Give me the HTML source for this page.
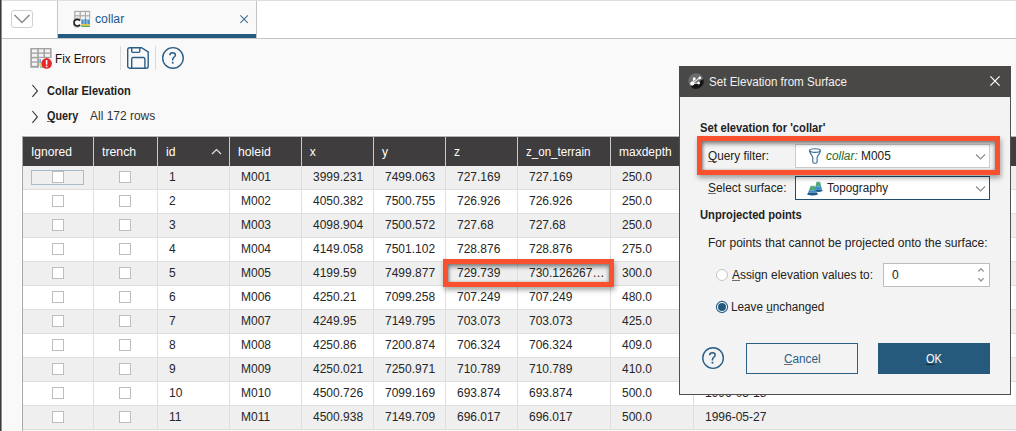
<!DOCTYPE html>
<html><head><meta charset="utf-8"><style>
html,body{margin:0;padding:0;}
body{width:1016px;height:431px;overflow:hidden;position:relative;font-family:"Liberation Sans", sans-serif;}
.t{position:absolute;white-space:nowrap;}
u{text-decoration:underline;text-decoration-skip-ink:none;text-decoration-thickness:1px;text-underline-offset:1px;text-decoration-color:rgba(0,0,0,0.55)}
div{box-sizing:content-box}
</style></head><body>
<div style="position:absolute;left:0px;top:0px;width:1016px;height:431px;background:#f9f9f9"></div><div style="position:absolute;left:0px;top:0px;width:1016px;height:38px;background:#fff"></div><div style="position:absolute;left:0px;top:0px;width:1016px;height:1px;background:#dedede"></div><div style="position:absolute;left:0px;top:38px;width:1016px;height:1px;background:#c4c4c4"></div><div style="position:absolute;left:11px;top:10px;width:20px;height:16px;border:1px solid #cfcfcf;border-radius:3px;background:#fff"></div><svg style="position:absolute;left:11px;top:10px" width="22" height="18"><polyline points="3.5,5 11,12.5 18.5,5" fill="none" stroke="#8a8a8a" stroke-width="1.5"/></svg><div style="position:absolute;left:57px;top:1px;width:199px;height:37px;background:#f9f9f9;border-left:1px solid #c4c4c4;border-right:1px solid #c4c4c4;box-sizing:border-box;width:200px"></div><div style="position:absolute;left:58px;top:34px;width:198px;height:4px;background:#245a80"></div><svg style="position:absolute;left:73px;top:10px" width="18" height="18" viewBox="0 0 18 18">
<rect x="1.2" y="0.8" width="16" height="16.2" fill="#a9a9a9"/>
<g fill="#f2f2f2"><rect x="2.4" y="2" width="4.2" height="3.2"/><rect x="7.8" y="2" width="4.2" height="3.2"/><rect x="13" y="2" width="3.2" height="3.2"/>
<rect x="2.4" y="6.4" width="4.2" height="2.6"/><rect x="7.8" y="6.4" width="4.2" height="2.6"/><rect x="13" y="6.4" width="3.2" height="2.6"/></g>
<rect x="0" y="9" width="18" height="9" fill="#f9f9f9"/>
<rect x="1.2" y="9" width="1" height="8" fill="#bbb"/>
<g><rect x="8.3" y="9.5" width="2.4" height="4.6" fill="#4a90c8"/><rect x="11.3" y="9" width="2.4" height="5.1" fill="#4a90c8"/><rect x="14.3" y="9.5" width="2.6" height="4.6" fill="#4a90c8"/>
<rect x="8" y="14" width="9" height="1.6" fill="#f0c828"/><rect x="8.3" y="15.6" width="8.6" height="1.4" fill="#5aa66a"/></g>
<path d="M7 10.6 A3.4 3.4 0 1 0 7 14.8" fill="none" stroke="#1a1a1a" stroke-width="1.7"/>
<path d="M7.6 9.6 A4.5 4.5 0 1 0 7.6 15.8" fill="none" stroke="#888" stroke-width="0.7"/>
</svg><div class="t" style="left:95.40px;top:12.75px;font-size:12.5px;line-height:12.5px;color:#1c5890;font-weight:normal;font-style:normal;transform:scaleX(0.9795);transform-origin:0 0;">collar</div><svg style="position:absolute;left:239px;top:14px" width="11" height="11"><path d="M1.4 1.4 L8.8 8.8 M8.8 1.4 L1.4 8.8" stroke="#3f6f95" stroke-width="1.1"/></svg><div style="position:absolute;left:0px;top:0px;width:1px;height:431px;background:#3c3c3c"></div><div style="position:absolute;left:1px;top:0px;width:1px;height:431px;background:#8c8c8c"></div><div style="position:absolute;left:2px;top:39px;width:1px;height:392px;background:#ffffff"></div><svg style="position:absolute;left:30px;top:48px" width="23" height="21" viewBox="0 0 23 21">
<rect x="0.3" y="0" width="21.3" height="19.8" fill="#a3a3a3"/>
<g fill="#f4f4f4">
<rect x="2" y="1.4" width="5.2" height="3"/><rect x="8.8" y="1.4" width="4.6" height="3"/><rect x="15" y="1.4" width="5" height="3"/>
<rect x="2" y="5.8" width="5.2" height="3"/><rect x="8.8" y="5.8" width="4.6" height="3"/><rect x="15" y="5.8" width="5" height="3"/>
<rect x="2" y="10.4" width="5.2" height="3"/><rect x="2" y="14.8" width="5.2" height="3"/>
</g>
<rect x="9" y="10" width="13" height="11" fill="#f8f8f8"/>
<rect x="9.5" y="11" width="1.2" height="4" fill="#3a8ad0"/><rect x="9.5" y="15" width="1.2" height="3" fill="#e8c820"/><rect x="10" y="18.5" width="3" height="1" fill="#40a060"/>
<circle cx="16.6" cy="15.4" r="5.3" fill="#e2262b"/>
<rect x="15.8" y="12" width="1.6" height="4.6" fill="#fff"/><rect x="15.8" y="17.6" width="1.6" height="1.6" fill="#fff"/>
</svg><div class="t" style="left:54.67px;top:52.75px;font-size:12.5px;line-height:12.5px;color:#111111;font-weight:normal;font-style:normal;transform:scaleX(0.9336);transform-origin:0 0;">Fix Errors</div><div style="position:absolute;left:120px;top:46px;width:1px;height:24px;background:#dadada"></div><svg style="position:absolute;left:126px;top:46px" width="24" height="24" viewBox="0 0 24 24">
<path d="M3.7 1.7 H15.5 L22.2 6 V20.2 a2 2 0 0 1 -2 2 H3.7 a2 2 0 0 1 -2 -2 V3.7 a2 2 0 0 1 2 -2 Z" fill="none" stroke="#2b5f86" stroke-width="1.4"/>
<path d="M5.7 1.8 V4.9 a1.5 1.5 0 0 0 1.5 1.5 H12.3 a1.5 1.5 0 0 0 1.5 -1.5 V1.8" fill="none" stroke="#2b5f86" stroke-width="1.4"/>
<path d="M5.7 22.2 V13 a1.5 1.5 0 0 1 1.5 -1.5 H17.4 a1.5 1.5 0 0 1 1.5 1.5 V22.2" fill="none" stroke="#2b5f86" stroke-width="1.4"/>
</svg><div style="position:absolute;left:155px;top:46px;width:1px;height:24px;background:#dadada"></div><svg style="position:absolute;left:161px;top:46px" width="24" height="24" viewBox="0 0 24 24">
<circle cx="11.95" cy="11.95" r="10.3" fill="none" stroke="#2b5f86" stroke-width="1.4"/>
<g transform="translate(0.2,0)"><path d="M8.7 9.2 C8.7 7.6 10 6.7 11.5 6.7 C13 6.7 14.2 7.6 14.2 9 C14.2 10.2 13.5 10.8 12.6 11.4 C11.9 11.9 11.5 12.4 11.5 13.4 V14.4" fill="none" stroke="#2b5f86" stroke-width="1.5"/><rect x="10.65" y="15.8" width="1.7" height="1.8" fill="#2b5f86"/></g>
</svg><svg style="position:absolute;left:31px;top:84px" width="9" height="14"><polyline points="1.4,1 6.4,6.9 1.4,12.8" fill="none" stroke="#333" stroke-width="1.1"/></svg><div class="t" style="left:47.25px;top:84.00px;font-size:13px;line-height:13px;color:#222;font-weight:bold;font-style:normal;transform:scaleX(0.8519);transform-origin:0 0;">Collar Elevation</div><svg style="position:absolute;left:31px;top:110px" width="9" height="14"><polyline points="1.4,1 6.4,6.9 1.4,12.8" fill="none" stroke="#333" stroke-width="1.1"/></svg><div class="t" style="left:47.00px;top:109.00px;font-size:13px;line-height:13px;color:#222;font-weight:bold;font-style:normal;transform:scaleX(0.8281);transform-origin:0 0;"><u>Q</u>uery</div><div class="t" style="left:90.25px;top:109.75px;font-size:12.5px;line-height:12.5px;color:#333;font-weight:normal;font-style:normal;transform:scaleX(0.9582);transform-origin:0 0;">All 172 rows</div><div style="position:absolute;left:21px;top:135px;width:1000px;height:1px;background:#ffffff"></div><div style="position:absolute;left:21px;top:135px;width:1px;height:300px;background:#ffffff"></div><div style="position:absolute;left:22px;top:136px;width:1000px;height:1px;background:#b4b4b4"></div><div style="position:absolute;left:22px;top:136px;width:1px;height:300px;background:#a8a8a8"></div><div style="position:absolute;left:23px;top:137px;width:1000px;height:29px;background:#3f3d3d"></div><div style="position:absolute;left:93px;top:137px;width:1px;height:29px;background:#cacaca"></div><div style="position:absolute;left:157px;top:137px;width:1px;height:29px;background:#cacaca"></div><div style="position:absolute;left:229px;top:137px;width:1px;height:29px;background:#cacaca"></div><div style="position:absolute;left:301px;top:137px;width:1px;height:29px;background:#cacaca"></div><div style="position:absolute;left:373px;top:137px;width:1px;height:29px;background:#cacaca"></div><div style="position:absolute;left:445px;top:137px;width:1px;height:29px;background:#cacaca"></div><div style="position:absolute;left:517px;top:137px;width:1px;height:29px;background:#cacaca"></div><div style="position:absolute;left:610px;top:137px;width:1px;height:29px;background:#cacaca"></div><div style="position:absolute;left:693px;top:137px;width:1px;height:29px;background:#cacaca"></div><div class="t" style="left:31.00px;top:146.00px;font-size:12px;line-height:12px;color:#ffffff;font-weight:normal;font-style:normal;transform:scaleX(1.0045);transform-origin:0 0;">Ignored</div><div class="t" style="left:102.20px;top:146.00px;font-size:12px;line-height:12px;color:#ffffff;font-weight:normal;font-style:normal;transform:scaleX(1.0221);transform-origin:0 0;">trench</div><div class="t" style="left:166.20px;top:146.00px;font-size:12px;line-height:12px;color:#ffffff;font-weight:normal;font-style:normal;transform:scaleX(1.0155);transform-origin:0 0;">id</div><div class="t" style="left:238.00px;top:146.00px;font-size:12px;line-height:12px;color:#ffffff;font-weight:normal;font-style:normal;transform:scaleX(1.0206);transform-origin:0 0;">holeid</div><div class="t" style="left:309.75px;top:146.00px;font-size:12px;line-height:12px;color:#ffffff;font-weight:normal;font-style:normal;">x</div><div class="t" style="left:382.00px;top:146.00px;font-size:12px;line-height:12px;color:#ffffff;font-weight:normal;font-style:normal;">y</div><div class="t" style="left:454.00px;top:146.00px;font-size:12px;line-height:12px;color:#ffffff;font-weight:normal;font-style:normal;">z</div><div class="t" style="left:526.25px;top:146.00px;font-size:12px;line-height:12px;color:#ffffff;font-weight:normal;font-style:normal;transform:scaleX(0.9654);transform-origin:0 0;">z_on_terrain</div><div class="t" style="left:619.25px;top:146.00px;font-size:12px;line-height:12px;color:#ffffff;font-weight:normal;font-style:normal;transform:scaleX(0.9995);transform-origin:0 0;">maxdepth</div><svg style="position:absolute;left:210px;top:147px" width="13" height="9"><polyline points="2,7 6.5,2.5 11,7" fill="none" stroke="#e6e6e6" stroke-width="1.2"/></svg><div style="position:absolute;left:23px;top:166px;width:1000px;height:23px;background:#efefef"></div><div style="position:absolute;left:23px;top:189px;width:1000px;height:1px;background:#dedede"></div><div style="position:absolute;left:93px;top:166px;width:1px;height:24px;background:#dedede"></div><div style="position:absolute;left:157px;top:166px;width:1px;height:24px;background:#dedede"></div><div style="position:absolute;left:229px;top:166px;width:1px;height:24px;background:#dedede"></div><div style="position:absolute;left:301px;top:166px;width:1px;height:24px;background:#dedede"></div><div style="position:absolute;left:373px;top:166px;width:1px;height:24px;background:#dedede"></div><div style="position:absolute;left:445px;top:166px;width:1px;height:24px;background:#dedede"></div><div style="position:absolute;left:517px;top:166px;width:1px;height:24px;background:#dedede"></div><div style="position:absolute;left:610px;top:166px;width:1px;height:24px;background:#dedede"></div><div style="position:absolute;left:693px;top:166px;width:1px;height:24px;background:#dedede"></div><div style="position:absolute;left:52px;top:171px;width:10px;height:10px;border:1px solid #bdbdbd;background:#fff"></div><div style="position:absolute;left:119px;top:171px;width:10px;height:10px;border:1px solid #bdbdbd;background:#fff"></div><div class="t" style="left:169.00px;top:171.00px;font-size:12px;line-height:12px;color:#262626;font-weight:normal;font-style:normal;">1</div><div class="t" style="left:241.00px;top:171.00px;font-size:12px;line-height:12px;color:#262626;font-weight:normal;font-style:normal;">M001</div><div class="t" style="left:313.00px;top:171.00px;font-size:12px;line-height:12px;color:#262626;font-weight:normal;font-style:normal;">3999.231</div><div class="t" style="left:385.00px;top:171.00px;font-size:12px;line-height:12px;color:#262626;font-weight:normal;font-style:normal;">7499.063</div><div class="t" style="left:457.00px;top:171.00px;font-size:12px;line-height:12px;color:#262626;font-weight:normal;font-style:normal;">727.169</div><div class="t" style="left:529.00px;top:171.00px;font-size:12px;line-height:12px;color:#262626;font-weight:normal;font-style:normal;">727.169</div><div class="t" style="left:622.00px;top:171.00px;font-size:12px;line-height:12px;color:#262626;font-weight:normal;font-style:normal;">250.0</div><div style="position:absolute;left:23px;top:190px;width:1000px;height:23px;background:#ffffff"></div><div style="position:absolute;left:23px;top:213px;width:1000px;height:1px;background:#dedede"></div><div style="position:absolute;left:93px;top:190px;width:1px;height:24px;background:#dedede"></div><div style="position:absolute;left:157px;top:190px;width:1px;height:24px;background:#dedede"></div><div style="position:absolute;left:229px;top:190px;width:1px;height:24px;background:#dedede"></div><div style="position:absolute;left:301px;top:190px;width:1px;height:24px;background:#dedede"></div><div style="position:absolute;left:373px;top:190px;width:1px;height:24px;background:#dedede"></div><div style="position:absolute;left:445px;top:190px;width:1px;height:24px;background:#dedede"></div><div style="position:absolute;left:517px;top:190px;width:1px;height:24px;background:#dedede"></div><div style="position:absolute;left:610px;top:190px;width:1px;height:24px;background:#dedede"></div><div style="position:absolute;left:693px;top:190px;width:1px;height:24px;background:#dedede"></div><div style="position:absolute;left:52px;top:195px;width:10px;height:10px;border:1px solid #bdbdbd;background:#fff"></div><div style="position:absolute;left:119px;top:195px;width:10px;height:10px;border:1px solid #bdbdbd;background:#fff"></div><div class="t" style="left:169.00px;top:195.00px;font-size:12px;line-height:12px;color:#262626;font-weight:normal;font-style:normal;">2</div><div class="t" style="left:241.00px;top:195.00px;font-size:12px;line-height:12px;color:#262626;font-weight:normal;font-style:normal;">M002</div><div class="t" style="left:313.00px;top:195.00px;font-size:12px;line-height:12px;color:#262626;font-weight:normal;font-style:normal;">4050.382</div><div class="t" style="left:385.00px;top:195.00px;font-size:12px;line-height:12px;color:#262626;font-weight:normal;font-style:normal;">7500.755</div><div class="t" style="left:457.00px;top:195.00px;font-size:12px;line-height:12px;color:#262626;font-weight:normal;font-style:normal;">726.926</div><div class="t" style="left:529.00px;top:195.00px;font-size:12px;line-height:12px;color:#262626;font-weight:normal;font-style:normal;">726.926</div><div class="t" style="left:622.00px;top:195.00px;font-size:12px;line-height:12px;color:#262626;font-weight:normal;font-style:normal;">250.0</div><div style="position:absolute;left:23px;top:214px;width:1000px;height:23px;background:#efefef"></div><div style="position:absolute;left:23px;top:237px;width:1000px;height:1px;background:#dedede"></div><div style="position:absolute;left:93px;top:214px;width:1px;height:24px;background:#dedede"></div><div style="position:absolute;left:157px;top:214px;width:1px;height:24px;background:#dedede"></div><div style="position:absolute;left:229px;top:214px;width:1px;height:24px;background:#dedede"></div><div style="position:absolute;left:301px;top:214px;width:1px;height:24px;background:#dedede"></div><div style="position:absolute;left:373px;top:214px;width:1px;height:24px;background:#dedede"></div><div style="position:absolute;left:445px;top:214px;width:1px;height:24px;background:#dedede"></div><div style="position:absolute;left:517px;top:214px;width:1px;height:24px;background:#dedede"></div><div style="position:absolute;left:610px;top:214px;width:1px;height:24px;background:#dedede"></div><div style="position:absolute;left:693px;top:214px;width:1px;height:24px;background:#dedede"></div><div style="position:absolute;left:52px;top:219px;width:10px;height:10px;border:1px solid #bdbdbd;background:#fff"></div><div style="position:absolute;left:119px;top:219px;width:10px;height:10px;border:1px solid #bdbdbd;background:#fff"></div><div class="t" style="left:169.00px;top:219.00px;font-size:12px;line-height:12px;color:#262626;font-weight:normal;font-style:normal;">3</div><div class="t" style="left:241.00px;top:219.00px;font-size:12px;line-height:12px;color:#262626;font-weight:normal;font-style:normal;">M003</div><div class="t" style="left:313.00px;top:219.00px;font-size:12px;line-height:12px;color:#262626;font-weight:normal;font-style:normal;">4098.904</div><div class="t" style="left:385.00px;top:219.00px;font-size:12px;line-height:12px;color:#262626;font-weight:normal;font-style:normal;">7500.572</div><div class="t" style="left:457.00px;top:219.00px;font-size:12px;line-height:12px;color:#262626;font-weight:normal;font-style:normal;">727.68</div><div class="t" style="left:529.00px;top:219.00px;font-size:12px;line-height:12px;color:#262626;font-weight:normal;font-style:normal;">727.68</div><div class="t" style="left:622.00px;top:219.00px;font-size:12px;line-height:12px;color:#262626;font-weight:normal;font-style:normal;">250.0</div><div style="position:absolute;left:23px;top:238px;width:1000px;height:23px;background:#ffffff"></div><div style="position:absolute;left:23px;top:261px;width:1000px;height:1px;background:#dedede"></div><div style="position:absolute;left:93px;top:238px;width:1px;height:24px;background:#dedede"></div><div style="position:absolute;left:157px;top:238px;width:1px;height:24px;background:#dedede"></div><div style="position:absolute;left:229px;top:238px;width:1px;height:24px;background:#dedede"></div><div style="position:absolute;left:301px;top:238px;width:1px;height:24px;background:#dedede"></div><div style="position:absolute;left:373px;top:238px;width:1px;height:24px;background:#dedede"></div><div style="position:absolute;left:445px;top:238px;width:1px;height:24px;background:#dedede"></div><div style="position:absolute;left:517px;top:238px;width:1px;height:24px;background:#dedede"></div><div style="position:absolute;left:610px;top:238px;width:1px;height:24px;background:#dedede"></div><div style="position:absolute;left:693px;top:238px;width:1px;height:24px;background:#dedede"></div><div style="position:absolute;left:52px;top:243px;width:10px;height:10px;border:1px solid #bdbdbd;background:#fff"></div><div style="position:absolute;left:119px;top:243px;width:10px;height:10px;border:1px solid #bdbdbd;background:#fff"></div><div class="t" style="left:169.00px;top:243.00px;font-size:12px;line-height:12px;color:#262626;font-weight:normal;font-style:normal;">4</div><div class="t" style="left:241.00px;top:243.00px;font-size:12px;line-height:12px;color:#262626;font-weight:normal;font-style:normal;">M004</div><div class="t" style="left:313.00px;top:243.00px;font-size:12px;line-height:12px;color:#262626;font-weight:normal;font-style:normal;">4149.058</div><div class="t" style="left:385.00px;top:243.00px;font-size:12px;line-height:12px;color:#262626;font-weight:normal;font-style:normal;">7501.102</div><div class="t" style="left:457.00px;top:243.00px;font-size:12px;line-height:12px;color:#262626;font-weight:normal;font-style:normal;">728.876</div><div class="t" style="left:529.00px;top:243.00px;font-size:12px;line-height:12px;color:#262626;font-weight:normal;font-style:normal;">728.876</div><div class="t" style="left:622.00px;top:243.00px;font-size:12px;line-height:12px;color:#262626;font-weight:normal;font-style:normal;">275.0</div><div style="position:absolute;left:23px;top:262px;width:1000px;height:23px;background:#efefef"></div><div style="position:absolute;left:23px;top:285px;width:1000px;height:1px;background:#dedede"></div><div style="position:absolute;left:93px;top:262px;width:1px;height:24px;background:#dedede"></div><div style="position:absolute;left:157px;top:262px;width:1px;height:24px;background:#dedede"></div><div style="position:absolute;left:229px;top:262px;width:1px;height:24px;background:#dedede"></div><div style="position:absolute;left:301px;top:262px;width:1px;height:24px;background:#dedede"></div><div style="position:absolute;left:373px;top:262px;width:1px;height:24px;background:#dedede"></div><div style="position:absolute;left:445px;top:262px;width:1px;height:24px;background:#dedede"></div><div style="position:absolute;left:517px;top:262px;width:1px;height:24px;background:#dedede"></div><div style="position:absolute;left:610px;top:262px;width:1px;height:24px;background:#dedede"></div><div style="position:absolute;left:693px;top:262px;width:1px;height:24px;background:#dedede"></div><div style="position:absolute;left:52px;top:267px;width:10px;height:10px;border:1px solid #bdbdbd;background:#fff"></div><div style="position:absolute;left:119px;top:267px;width:10px;height:10px;border:1px solid #bdbdbd;background:#fff"></div><div class="t" style="left:169.00px;top:267.00px;font-size:12px;line-height:12px;color:#262626;font-weight:normal;font-style:normal;">5</div><div class="t" style="left:241.00px;top:267.00px;font-size:12px;line-height:12px;color:#262626;font-weight:normal;font-style:normal;">M005</div><div class="t" style="left:313.00px;top:267.00px;font-size:12px;line-height:12px;color:#262626;font-weight:normal;font-style:normal;">4199.59</div><div class="t" style="left:385.00px;top:267.00px;font-size:12px;line-height:12px;color:#262626;font-weight:normal;font-style:normal;">7499.877</div><div class="t" style="left:457.00px;top:267.00px;font-size:12px;line-height:12px;color:#262626;font-weight:normal;font-style:normal;">729.739</div><div class="t" style="left:529.00px;top:267.00px;font-size:12px;line-height:12px;color:#262626;font-weight:normal;font-style:normal;">730.126267…</div><div class="t" style="left:622.00px;top:267.00px;font-size:12px;line-height:12px;color:#262626;font-weight:normal;font-style:normal;">300.0</div><div style="position:absolute;left:23px;top:286px;width:1000px;height:23px;background:#ffffff"></div><div style="position:absolute;left:23px;top:309px;width:1000px;height:1px;background:#dedede"></div><div style="position:absolute;left:93px;top:286px;width:1px;height:24px;background:#dedede"></div><div style="position:absolute;left:157px;top:286px;width:1px;height:24px;background:#dedede"></div><div style="position:absolute;left:229px;top:286px;width:1px;height:24px;background:#dedede"></div><div style="position:absolute;left:301px;top:286px;width:1px;height:24px;background:#dedede"></div><div style="position:absolute;left:373px;top:286px;width:1px;height:24px;background:#dedede"></div><div style="position:absolute;left:445px;top:286px;width:1px;height:24px;background:#dedede"></div><div style="position:absolute;left:517px;top:286px;width:1px;height:24px;background:#dedede"></div><div style="position:absolute;left:610px;top:286px;width:1px;height:24px;background:#dedede"></div><div style="position:absolute;left:693px;top:286px;width:1px;height:24px;background:#dedede"></div><div style="position:absolute;left:52px;top:291px;width:10px;height:10px;border:1px solid #bdbdbd;background:#fff"></div><div style="position:absolute;left:119px;top:291px;width:10px;height:10px;border:1px solid #bdbdbd;background:#fff"></div><div class="t" style="left:169.00px;top:291.00px;font-size:12px;line-height:12px;color:#262626;font-weight:normal;font-style:normal;">6</div><div class="t" style="left:241.00px;top:291.00px;font-size:12px;line-height:12px;color:#262626;font-weight:normal;font-style:normal;">M006</div><div class="t" style="left:313.00px;top:291.00px;font-size:12px;line-height:12px;color:#262626;font-weight:normal;font-style:normal;">4250.21</div><div class="t" style="left:385.00px;top:291.00px;font-size:12px;line-height:12px;color:#262626;font-weight:normal;font-style:normal;">7099.258</div><div class="t" style="left:457.00px;top:291.00px;font-size:12px;line-height:12px;color:#262626;font-weight:normal;font-style:normal;">707.249</div><div class="t" style="left:529.00px;top:291.00px;font-size:12px;line-height:12px;color:#262626;font-weight:normal;font-style:normal;">707.249</div><div class="t" style="left:622.00px;top:291.00px;font-size:12px;line-height:12px;color:#262626;font-weight:normal;font-style:normal;">480.0</div><div style="position:absolute;left:23px;top:310px;width:1000px;height:23px;background:#efefef"></div><div style="position:absolute;left:23px;top:333px;width:1000px;height:1px;background:#dedede"></div><div style="position:absolute;left:93px;top:310px;width:1px;height:24px;background:#dedede"></div><div style="position:absolute;left:157px;top:310px;width:1px;height:24px;background:#dedede"></div><div style="position:absolute;left:229px;top:310px;width:1px;height:24px;background:#dedede"></div><div style="position:absolute;left:301px;top:310px;width:1px;height:24px;background:#dedede"></div><div style="position:absolute;left:373px;top:310px;width:1px;height:24px;background:#dedede"></div><div style="position:absolute;left:445px;top:310px;width:1px;height:24px;background:#dedede"></div><div style="position:absolute;left:517px;top:310px;width:1px;height:24px;background:#dedede"></div><div style="position:absolute;left:610px;top:310px;width:1px;height:24px;background:#dedede"></div><div style="position:absolute;left:693px;top:310px;width:1px;height:24px;background:#dedede"></div><div style="position:absolute;left:52px;top:315px;width:10px;height:10px;border:1px solid #bdbdbd;background:#fff"></div><div style="position:absolute;left:119px;top:315px;width:10px;height:10px;border:1px solid #bdbdbd;background:#fff"></div><div class="t" style="left:169.00px;top:315.00px;font-size:12px;line-height:12px;color:#262626;font-weight:normal;font-style:normal;">7</div><div class="t" style="left:241.00px;top:315.00px;font-size:12px;line-height:12px;color:#262626;font-weight:normal;font-style:normal;">M007</div><div class="t" style="left:313.00px;top:315.00px;font-size:12px;line-height:12px;color:#262626;font-weight:normal;font-style:normal;">4249.95</div><div class="t" style="left:385.00px;top:315.00px;font-size:12px;line-height:12px;color:#262626;font-weight:normal;font-style:normal;">7149.795</div><div class="t" style="left:457.00px;top:315.00px;font-size:12px;line-height:12px;color:#262626;font-weight:normal;font-style:normal;">703.073</div><div class="t" style="left:529.00px;top:315.00px;font-size:12px;line-height:12px;color:#262626;font-weight:normal;font-style:normal;">703.073</div><div class="t" style="left:622.00px;top:315.00px;font-size:12px;line-height:12px;color:#262626;font-weight:normal;font-style:normal;">425.0</div><div style="position:absolute;left:23px;top:334px;width:1000px;height:23px;background:#ffffff"></div><div style="position:absolute;left:23px;top:357px;width:1000px;height:1px;background:#dedede"></div><div style="position:absolute;left:93px;top:334px;width:1px;height:24px;background:#dedede"></div><div style="position:absolute;left:157px;top:334px;width:1px;height:24px;background:#dedede"></div><div style="position:absolute;left:229px;top:334px;width:1px;height:24px;background:#dedede"></div><div style="position:absolute;left:301px;top:334px;width:1px;height:24px;background:#dedede"></div><div style="position:absolute;left:373px;top:334px;width:1px;height:24px;background:#dedede"></div><div style="position:absolute;left:445px;top:334px;width:1px;height:24px;background:#dedede"></div><div style="position:absolute;left:517px;top:334px;width:1px;height:24px;background:#dedede"></div><div style="position:absolute;left:610px;top:334px;width:1px;height:24px;background:#dedede"></div><div style="position:absolute;left:693px;top:334px;width:1px;height:24px;background:#dedede"></div><div style="position:absolute;left:52px;top:339px;width:10px;height:10px;border:1px solid #bdbdbd;background:#fff"></div><div style="position:absolute;left:119px;top:339px;width:10px;height:10px;border:1px solid #bdbdbd;background:#fff"></div><div class="t" style="left:169.00px;top:339.00px;font-size:12px;line-height:12px;color:#262626;font-weight:normal;font-style:normal;">8</div><div class="t" style="left:241.00px;top:339.00px;font-size:12px;line-height:12px;color:#262626;font-weight:normal;font-style:normal;">M008</div><div class="t" style="left:313.00px;top:339.00px;font-size:12px;line-height:12px;color:#262626;font-weight:normal;font-style:normal;">4250.86</div><div class="t" style="left:385.00px;top:339.00px;font-size:12px;line-height:12px;color:#262626;font-weight:normal;font-style:normal;">7200.874</div><div class="t" style="left:457.00px;top:339.00px;font-size:12px;line-height:12px;color:#262626;font-weight:normal;font-style:normal;">706.324</div><div class="t" style="left:529.00px;top:339.00px;font-size:12px;line-height:12px;color:#262626;font-weight:normal;font-style:normal;">706.324</div><div class="t" style="left:622.00px;top:339.00px;font-size:12px;line-height:12px;color:#262626;font-weight:normal;font-style:normal;">409.0</div><div style="position:absolute;left:23px;top:358px;width:1000px;height:23px;background:#efefef"></div><div style="position:absolute;left:23px;top:381px;width:1000px;height:1px;background:#dedede"></div><div style="position:absolute;left:93px;top:358px;width:1px;height:24px;background:#dedede"></div><div style="position:absolute;left:157px;top:358px;width:1px;height:24px;background:#dedede"></div><div style="position:absolute;left:229px;top:358px;width:1px;height:24px;background:#dedede"></div><div style="position:absolute;left:301px;top:358px;width:1px;height:24px;background:#dedede"></div><div style="position:absolute;left:373px;top:358px;width:1px;height:24px;background:#dedede"></div><div style="position:absolute;left:445px;top:358px;width:1px;height:24px;background:#dedede"></div><div style="position:absolute;left:517px;top:358px;width:1px;height:24px;background:#dedede"></div><div style="position:absolute;left:610px;top:358px;width:1px;height:24px;background:#dedede"></div><div style="position:absolute;left:693px;top:358px;width:1px;height:24px;background:#dedede"></div><div style="position:absolute;left:52px;top:363px;width:10px;height:10px;border:1px solid #bdbdbd;background:#fff"></div><div style="position:absolute;left:119px;top:363px;width:10px;height:10px;border:1px solid #bdbdbd;background:#fff"></div><div class="t" style="left:169.00px;top:363.00px;font-size:12px;line-height:12px;color:#262626;font-weight:normal;font-style:normal;">9</div><div class="t" style="left:241.00px;top:363.00px;font-size:12px;line-height:12px;color:#262626;font-weight:normal;font-style:normal;">M009</div><div class="t" style="left:313.00px;top:363.00px;font-size:12px;line-height:12px;color:#262626;font-weight:normal;font-style:normal;">4250.021</div><div class="t" style="left:385.00px;top:363.00px;font-size:12px;line-height:12px;color:#262626;font-weight:normal;font-style:normal;">7250.971</div><div class="t" style="left:457.00px;top:363.00px;font-size:12px;line-height:12px;color:#262626;font-weight:normal;font-style:normal;">710.789</div><div class="t" style="left:529.00px;top:363.00px;font-size:12px;line-height:12px;color:#262626;font-weight:normal;font-style:normal;">710.789</div><div class="t" style="left:622.00px;top:363.00px;font-size:12px;line-height:12px;color:#262626;font-weight:normal;font-style:normal;">410.0</div><div style="position:absolute;left:23px;top:382px;width:1000px;height:23px;background:#ffffff"></div><div style="position:absolute;left:23px;top:405px;width:1000px;height:1px;background:#dedede"></div><div style="position:absolute;left:93px;top:382px;width:1px;height:24px;background:#dedede"></div><div style="position:absolute;left:157px;top:382px;width:1px;height:24px;background:#dedede"></div><div style="position:absolute;left:229px;top:382px;width:1px;height:24px;background:#dedede"></div><div style="position:absolute;left:301px;top:382px;width:1px;height:24px;background:#dedede"></div><div style="position:absolute;left:373px;top:382px;width:1px;height:24px;background:#dedede"></div><div style="position:absolute;left:445px;top:382px;width:1px;height:24px;background:#dedede"></div><div style="position:absolute;left:517px;top:382px;width:1px;height:24px;background:#dedede"></div><div style="position:absolute;left:610px;top:382px;width:1px;height:24px;background:#dedede"></div><div style="position:absolute;left:693px;top:382px;width:1px;height:24px;background:#dedede"></div><div style="position:absolute;left:52px;top:387px;width:10px;height:10px;border:1px solid #bdbdbd;background:#fff"></div><div style="position:absolute;left:119px;top:387px;width:10px;height:10px;border:1px solid #bdbdbd;background:#fff"></div><div class="t" style="left:169.00px;top:387.00px;font-size:12px;line-height:12px;color:#262626;font-weight:normal;font-style:normal;">10</div><div class="t" style="left:241.00px;top:387.00px;font-size:12px;line-height:12px;color:#262626;font-weight:normal;font-style:normal;">M010</div><div class="t" style="left:313.00px;top:387.00px;font-size:12px;line-height:12px;color:#262626;font-weight:normal;font-style:normal;">4500.726</div><div class="t" style="left:385.00px;top:387.00px;font-size:12px;line-height:12px;color:#262626;font-weight:normal;font-style:normal;">7099.169</div><div class="t" style="left:457.00px;top:387.00px;font-size:12px;line-height:12px;color:#262626;font-weight:normal;font-style:normal;">693.874</div><div class="t" style="left:529.00px;top:387.00px;font-size:12px;line-height:12px;color:#262626;font-weight:normal;font-style:normal;">693.874</div><div class="t" style="left:622.00px;top:387.00px;font-size:12px;line-height:12px;color:#262626;font-weight:normal;font-style:normal;">500.0</div><div class="t" style="left:705.00px;top:387.00px;font-size:12px;line-height:12px;color:#262626;font-weight:normal;font-style:normal;">1996-05-18</div><div style="position:absolute;left:23px;top:406px;width:1000px;height:23px;background:#efefef"></div><div style="position:absolute;left:23px;top:429px;width:1000px;height:1px;background:#dedede"></div><div style="position:absolute;left:93px;top:406px;width:1px;height:24px;background:#dedede"></div><div style="position:absolute;left:157px;top:406px;width:1px;height:24px;background:#dedede"></div><div style="position:absolute;left:229px;top:406px;width:1px;height:24px;background:#dedede"></div><div style="position:absolute;left:301px;top:406px;width:1px;height:24px;background:#dedede"></div><div style="position:absolute;left:373px;top:406px;width:1px;height:24px;background:#dedede"></div><div style="position:absolute;left:445px;top:406px;width:1px;height:24px;background:#dedede"></div><div style="position:absolute;left:517px;top:406px;width:1px;height:24px;background:#dedede"></div><div style="position:absolute;left:610px;top:406px;width:1px;height:24px;background:#dedede"></div><div style="position:absolute;left:693px;top:406px;width:1px;height:24px;background:#dedede"></div><div style="position:absolute;left:52px;top:411px;width:10px;height:10px;border:1px solid #bdbdbd;background:#fff"></div><div style="position:absolute;left:119px;top:411px;width:10px;height:10px;border:1px solid #bdbdbd;background:#fff"></div><div class="t" style="left:169.00px;top:411.00px;font-size:12px;line-height:12px;color:#262626;font-weight:normal;font-style:normal;">11</div><div class="t" style="left:241.00px;top:411.00px;font-size:12px;line-height:12px;color:#262626;font-weight:normal;font-style:normal;">M011</div><div class="t" style="left:313.00px;top:411.00px;font-size:12px;line-height:12px;color:#262626;font-weight:normal;font-style:normal;">4500.938</div><div class="t" style="left:385.00px;top:411.00px;font-size:12px;line-height:12px;color:#262626;font-weight:normal;font-style:normal;">7149.709</div><div class="t" style="left:457.00px;top:411.00px;font-size:12px;line-height:12px;color:#262626;font-weight:normal;font-style:normal;">696.017</div><div class="t" style="left:529.00px;top:411.00px;font-size:12px;line-height:12px;color:#262626;font-weight:normal;font-style:normal;">696.017</div><div class="t" style="left:622.00px;top:411.00px;font-size:12px;line-height:12px;color:#262626;font-weight:normal;font-style:normal;">500.0</div><div class="t" style="left:705.00px;top:411.00px;font-size:12px;line-height:12px;color:#262626;font-weight:normal;font-style:normal;">1996-05-27</div><div style="position:absolute;left:31px;top:170px;width:51px;height:13px;border:1px solid #a9bccb"></div><div style="position:absolute;left:443px;top:259px;width:161px;height:18px;border:5px solid #f9512f;box-shadow:1px 3px 5px rgba(0,0,0,0.35), inset 0px 3px 4px rgba(0,0,0,0.42), inset 1px 0px 3px rgba(0,0,0,0.25)"></div><div style="position:absolute;left:679px;top:66px;width:332px;height:329px;background:#f3f3f3;border:1px solid #505050;box-sizing:border-box"></div><div style="position:absolute;left:679px;top:66px;width:332px;height:31px;background:#4a4846"></div><svg style="position:absolute;left:687px;top:72px" width="18" height="18" viewBox="0 0 18 18">
<circle cx="9" cy="8.95" r="7.7" fill="#6c6c6c"/>
<path d="M3.5 14.4 L16.4 6.9 A7.7 7.7 0 0 1 3.5 14.4 Z" fill="#161616"/>
<g stroke="#e8e8e8" stroke-width="1.1"><line x1="5.2" y1="11.5" x2="7.2" y2="6.7"/><line x1="5.2" y1="11.5" x2="12.8" y2="5.9"/><line x1="5.2" y1="11.5" x2="11.6" y2="11"/></g>
<g fill="#fff"><circle cx="5.2" cy="11.5" r="2"/><circle cx="7.2" cy="6.7" r="1.5"/><circle cx="12.8" cy="5.9" r="1.4"/><circle cx="11.6" cy="11" r="1.4"/></g>
</svg><div class="t" style="left:709.20px;top:75.75px;font-size:12.5px;line-height:12.5px;color:#f2f2f2;font-weight:normal;font-style:normal;transform:scaleX(0.9279);transform-origin:0 0;">Set Elevation from Surface</div><svg style="position:absolute;left:988px;top:74px" width="13" height="13"><path d="M2.4 2.4 L11.6 11.6 M11.6 2.4 L2.4 11.6" stroke="#fff" stroke-width="1.25"/></svg><div class="t" style="left:700.25px;top:121.00px;font-size:13px;line-height:13px;color:#222;font-weight:bold;font-style:normal;transform:scaleX(0.8607);transform-origin:0 0;">Set elevation for 'collar'</div><div class="t" style="left:708.20px;top:149.75px;font-size:12.5px;line-height:12.5px;color:#222;font-weight:normal;font-style:normal;transform:scaleX(0.9434);transform-origin:0 0;"><u>Q</u>uery filter:</div><div style="position:absolute;left:795px;top:144px;width:195px;height:24px;border:1px solid #cccccc;background:#fff;box-sizing:border-box"></div><svg style="position:absolute;left:807px;top:147px" width="15" height="18" viewBox="0 0 15 18">
<ellipse cx="7.93" cy="3.55" rx="5.43" ry="1.8" fill="none" stroke="#3a6a90" stroke-width="1.1"/>
<path d="M2.5 3.55 C2.6 7 5.8 8.5 5.8 10.8 V14.75 a1.5 1.5 0 0 0 1.5 1.5 H8.6 a1.5 1.5 0 0 0 1.5 -1.5 V10.8 C10.1 8.5 13.3 7 13.35 3.55" fill="none" stroke="#3a6a90" stroke-width="1.1"/>
</svg><div class="t" style="left:826.20px;top:149.75px;font-size:12.5px;line-height:12.5px;color:#222;font-weight:normal;font-style:normal;transform:scaleX(0.9511);transform-origin:0 0;"><i style="color:#1f6a1f">collar:</i> M005</div><svg style="position:absolute;left:975px;top:153px" width="12" height="8"><polyline points="1,1.5 5.5,6 10,1.5" fill="none" stroke="#888" stroke-width="1.1"/></svg><div class="t" style="left:708.00px;top:181.75px;font-size:12.5px;line-height:12.5px;color:#222;font-weight:normal;font-style:normal;transform:scaleX(0.9488);transform-origin:0 0;"><u>S</u>elect surface:</div><div style="position:absolute;left:795px;top:176px;width:195px;height:24px;border:1px solid #1f4e72;background:#fff;box-sizing:border-box"></div><svg style="position:absolute;left:806px;top:179px" width="18" height="18" viewBox="0 0 18 18">
<path d="M10.57 2.80 Q12.30 0.90 14.03 2.80 Q12.30 3.60 10.57 2.80 Z" fill="#e4ecec"/><path d="M10.57 2.80 Q12.30 3.60 14.03 2.80 L15.09 7.00 Q12.30 7.80 9.51 7.00 Z" fill="#4fa97a"/><path d="M9.51 7.00 Q12.30 7.80 15.09 7.00 L15.99 10.60 Q12.30 11.40 8.61 10.60 Z" fill="#3f8ecb"/><path d="M8.61 10.60 Q12.30 11.40 15.99 10.60 L16.60 12.00 Q12.30 14.20 8.00 12.00 Z" fill="#1f5886"/><path d="M4.63 6.80 Q6.55 4.80 8.47 6.80 Q6.55 7.60 4.63 6.80 Z" fill="#e4ecec"/><path d="M4.63 6.80 Q6.55 7.60 8.47 6.80 L10.02 11.00 Q6.55 11.80 3.08 11.00 Z" fill="#4fa97a"/><path d="M3.08 11.00 Q6.55 11.80 10.02 11.00 L10.90 13.40 Q6.55 14.20 2.20 13.40 Z" fill="#3f8ecb"/><path d="M2.20 13.40 Q6.55 14.20 10.90 13.40 L12.05 15.50 Q6.55 17.70 1.05 15.50 Z" fill="#1f5886"/>
</svg><div class="t" style="left:826.80px;top:181.75px;font-size:12.5px;line-height:12.5px;color:#222;font-weight:normal;font-style:normal;transform:scaleX(0.9345);transform-origin:0 0;">Topography</div><svg style="position:absolute;left:975px;top:185px" width="12" height="8"><polyline points="1,1.5 5.5,6 10,1.5" fill="none" stroke="#888" stroke-width="1.1"/></svg><div class="t" style="left:700.25px;top:208.00px;font-size:13px;line-height:13px;color:#222;font-weight:bold;font-style:normal;transform:scaleX(0.8594);transform-origin:0 0;">Unprojected points</div><div class="t" style="left:707.53px;top:236.75px;font-size:12.5px;line-height:12.5px;color:#222;font-weight:normal;font-style:normal;transform:scaleX(0.9652);transform-origin:0 0;">For points that cannot be projected onto the surface:</div><div style="position:absolute;left:716px;top:269px;width:10px;height:10px;border:1px solid #c4c4c4;background:#fff;border-radius:50%"></div><div class="t" style="left:732.25px;top:268.75px;font-size:12.5px;line-height:12.5px;color:#222;font-weight:normal;font-style:normal;transform:scaleX(0.9523);transform-origin:0 0;"><u>A</u>ssign elevation values to:</div><div style="position:absolute;left:883px;top:263px;width:107px;height:24px;border:1px solid #bdbdbd;background:#fff;box-sizing:border-box"></div><div class="t" style="left:892.00px;top:269.00px;font-size:12px;line-height:12px;color:#222;font-weight:normal;font-style:normal;">0</div><svg style="position:absolute;left:976px;top:266px" width="10" height="18"><polyline points="2.4,5.5 5,2.8 7.6,5.5" fill="none" stroke="#959595" stroke-width="1.3"/><polyline points="2.4,12.3 5,15 7.6,12.3" fill="none" stroke="#959595" stroke-width="1.3"/></svg><svg style="position:absolute;left:715px;top:300px" width="14" height="14"><circle cx="7" cy="7" r="5.6" fill="#fff" stroke="#2b5f86" stroke-width="1.1"/><circle cx="7" cy="7" r="4" fill="#245a80"/></svg><div class="t" style="left:731.36px;top:300.75px;font-size:12.5px;line-height:12.5px;color:#222;font-weight:normal;font-style:normal;transform:scaleX(0.9396);transform-origin:0 0;">Leave <u>u</u>nchanged</div><svg style="position:absolute;left:701px;top:346px" width="24" height="24" viewBox="0 0 24 24">
<circle cx="12.05" cy="12.05" r="10.3" fill="none" stroke="#2b5f86" stroke-width="1.4"/>
<path d="M8.7 9.2 C8.7 7.6 10 6.7 11.5 6.7 C13 6.7 14.2 7.6 14.2 9 C14.2 10.2 13.5 10.8 12.6 11.4 C11.9 11.9 11.5 12.4 11.5 13.4 V14.4" fill="none" stroke="#2b5f86" stroke-width="1.5"/><rect x="10.65" y="15.8" width="1.7" height="1.8" fill="#2b5f86"/>
</svg><div style="position:absolute;left:746px;top:343px;width:112px;height:31px;border:1.5px solid #2b5f86;box-sizing:border-box;background:#f3f3f3"></div><div class="t" style="left:784.00px;top:353.00px;font-size:12px;line-height:12px;color:#2b5f86;font-weight:normal;font-style:normal;transform:scaleX(0.9813);transform-origin:0 0;"><u>C</u>ancel</div><div style="position:absolute;left:878px;top:343px;width:112px;height:31px;background:#255a7d"></div><div class="t" style="left:926.00px;top:353.00px;font-size:12px;line-height:12px;color:#fff;font-weight:normal;font-style:normal;transform:scaleX(0.9173);transform-origin:0 0;"><u>O</u>K</div><div style="position:absolute;left:697px;top:136px;width:293px;height:29px;border:5px solid #f9512f;box-shadow:1px 3px 5px rgba(0,0,0,0.35), inset 0px 3px 4px rgba(0,0,0,0.42), inset 1px 0px 3px rgba(0,0,0,0.25)"></div>
</body></html>
